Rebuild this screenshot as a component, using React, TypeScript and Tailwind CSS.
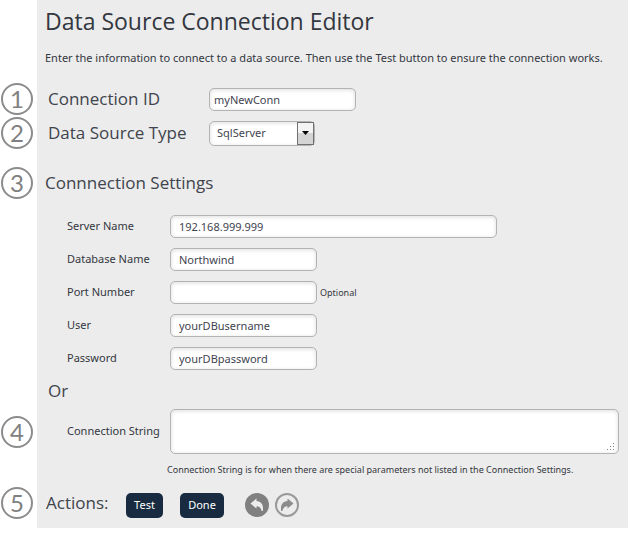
import { useState } from "react";
import type { ReactNode } from "react";

const inputStyle =
  "h-[23px] min-w-0 rounded-[5px] border border-[#b3b3b3] bg-white px-2 text-[11px] text-[#3f4450] shadow-[inset_0_1px_4px_rgba(0,0,0,0.14)] outline-none";

const headingStyle = "font-['Open_Sans',sans-serif] text-[17px] text-[#40444c]";

const Badge = ({ value }: { value: number }) => (
  <span className="flex size-8 items-center justify-center rounded-full border-2 border-[#8c8c8c] bg-white font-['Lato',sans-serif] text-2xl leading-none text-[#808080]">
    {value}
  </span>
);

interface RowProps {
  step?: number;
  className?: string;
  children: ReactNode;
}

const Row = ({ step, className = "", children }: RowProps) => (
  <div className={`flex items-center ${className}`}>
    <div className="w-[37px] shrink-0 pl-px">{step && <Badge value={step} />}</div>
    {children}
  </div>
);

interface FieldProps {
  id: string;
  label: string;
  width?: string;
  value?: string;
  note?: string;
}

const Field = ({ id, label, width = "w-[147px]", value = "", note }: FieldProps) => {
  const [text, setText] = useState(value);
  return (
    <Row className="h-[33px]">
      <label htmlFor={id} className="ml-[30px] w-[103px] shrink-0">
        {label}
      </label>
      <input
        id={id}
        type="text"
        value={text}
        onChange={(e) => setText(e.target.value)}
        className={`${inputStyle} ${width}`}
      />
      {note && <span className="ml-[3px] text-[9px]">{note}</span>}
    </Row>
  );
};

const Arrow = ({ className = "" }: { className?: string }) => (
  <svg viewBox="0 0 24 24" className={`size-6 ${className}`} fill="currentColor" aria-hidden="true">
    <path d="M5.5 10.5 L11.5 5.5 V8 C16.5 8.4 18.8 12 17.8 18 H16.6 C16 15 14.6 13.4 11.5 13.2 V15.6 Z" />
  </svg>
);

const App = () => {
  const [connId, setConnId] = useState("myNewConn");
  const [connString, setConnString] = useState("");

  return (
    <main className="bg-[linear-gradient(to_right,#ffffff_37px,#ececec_37px)] pb-2 font-['Noto_Sans',sans-serif] text-[11px] text-[#333740]">
      <Row className="h-[42px]">
        <h1 className="ml-2 font-['Open_Sans',sans-serif] text-[23px]">
          Data Source Connection Editor
        </h1>
      </Row>
      <Row className="h-8">
        <p className="ml-2">
          Enter the information to connect to a data source. Then use the Test button to ensure the
          connection works.
        </p>
      </Row>

      <Row step={1} className="mt-2 h-[34px]">
        <label htmlFor="connId" className={`ml-[11px] w-[161px] shrink-0 ${headingStyle}`}>
          Connection ID
        </label>
        <input
          id="connId"
          type="text"
          value={connId}
          onChange={(e) => setConnId(e.target.value)}
          className={`${inputStyle} w-[147px] pl-1`}
        />
      </Row>
      <Row step={2} className="h-[34px]">
        <label htmlFor="sourceType" className={`ml-[11px] w-[161px] shrink-0 ${headingStyle}`}>
          Data Source Type
        </label>
        <div className="relative h-[25px] w-[106px]">
          <select
            id="sourceType"
            className="size-full appearance-none rounded-[5px] border border-[#b3b3b3] bg-white pr-5 pl-[7px] text-[11px] text-[#3f4450] shadow-[inset_0_1px_4px_rgba(0,0,0,0.14)] outline-none"
          >
            <option>SqlServer</option>
            <option>Oracle</option>
            <option>MySql</option>
          </select>
          <span className="pointer-events-none absolute inset-y-px right-px flex w-[17px] items-center justify-center border border-[#707070] bg-linear-to-b from-[#f4f4f4] from-50% to-[#d4d4d4] to-50%">
            <svg viewBox="0 0 7 4" className="h-1 w-[7px]" aria-hidden="true">
              <path d="M0 0H7L3.5 4Z" />
            </svg>
          </span>
        </div>
      </Row>

      <Row step={3} className="mt-4 h-[34px]">
        <h2 className={`ml-2 ${headingStyle}`}>Connnection Settings</h2>
      </Row>
      <div className="mt-2.5">
        <Field id="server" label="Server Name" width="w-[327px]" value="192.168.999.999" />
        <Field id="database" label="Database Name" value="Northwind" />
        <Field id="port" label="Port Number" note="Optional" />
        <Field id="user" label="User" value="yourDBusername" />
        <Field id="password" label="Password" value="yourDBpassword" />
      </div>
      <Row className="mb-0.5 h-8">
        <h2 className={`ml-[11px] ${headingStyle}`}>Or</h2>
      </Row>

      <Row step={4} className="pr-[9px]">
        <label htmlFor="connString" className="ml-[30px] w-[103px] shrink-0">
          Connection String
        </label>
        <div className="relative flex min-w-0 flex-1">
          <textarea
            id="connString"
            value={connString}
            onChange={(e) => setConnString(e.target.value)}
            className="h-[45px] min-w-0 flex-1 resize-none rounded-[5px] border border-[#b3b3b3] bg-white px-2 py-1 shadow-[inset_0_1px_4px_rgba(0,0,0,0.14)] outline-none"
          />
          <svg
            viewBox="0 0 8 8"
            className="pointer-events-none absolute right-1 bottom-[3px] size-2"
            fill="#808080"
            aria-hidden="true"
          >
            <path d="M6 0h1v1H6zM3 3h1v1H3zM6 3h1v1H6zM0 6h1v1H0zM3 6h1v1H3zM6 6h1v1H6z" />
          </svg>
        </div>
      </Row>
      <p className="mt-2 ml-[167px] text-[9px] leading-4">
        Connection String is for when there are special parameters not listed in the Connection
        Settings.
      </p>

      <Row step={5} className="mt-2 h-[34px]">
        <h2 className={`ml-[9px] w-20 ${headingStyle}`}>Actions:</h2>
        <div className="mt-1 flex items-center">
          <button type="button" className="h-[25px] w-[37px] rounded-[5px] bg-[#182b40] text-white">
            Test
          </button>
          <button
            type="button"
            className="ml-[17px] h-[25px] w-11 rounded-[5px] bg-[#182b40] text-white"
          >
            Done
          </button>
          <button
            type="button"
            aria-label="Undo"
            className="ml-[21px] size-6 rounded-full bg-[#808080] text-[#ececec]"
          >
            <Arrow />
          </button>
          <button
            type="button"
            aria-label="Redo"
            className="ml-1.5 flex size-6 items-center justify-center rounded-full border-2 border-[#999999] text-[#8c8c8c]"
          >
            <Arrow className="shrink-0 -scale-x-100" />
          </button>
        </div>
      </Row>
    </main>
  );
};

export default App;
